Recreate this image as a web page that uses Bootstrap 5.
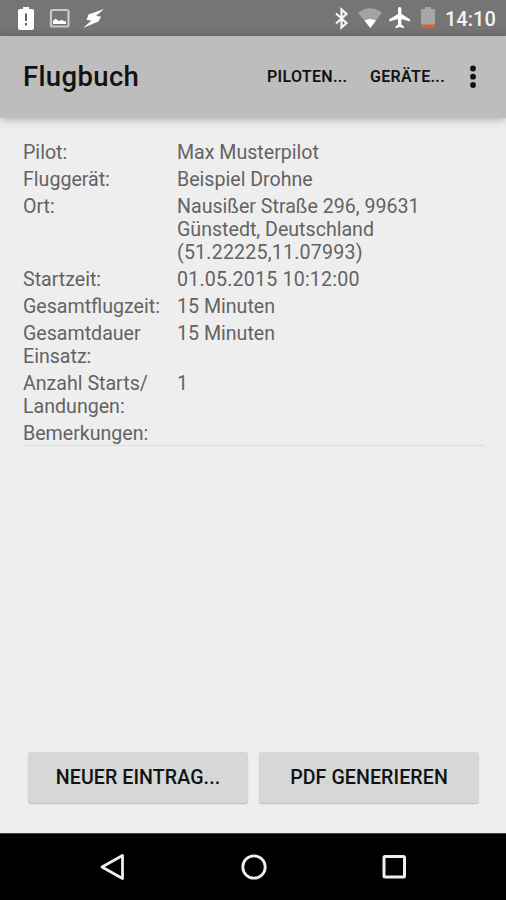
<!DOCTYPE html>
<html lang="de">
<head>
<meta charset="utf-8">
<meta name="viewport" content="width=device-width, initial-scale=1">
<title>Flugbuch</title>
<link href="https://cdn.jsdelivr.net/npm/bootstrap@5.3.0/dist/css/bootstrap.min.css" rel="stylesheet">
<style>
body{font-family:Roboto,"Noto Sans",sans-serif;background:#eee;color:#636363;height:900px;overflow:hidden}
.statusbar{height:36px;background:#757575;padding:0 11px 0 18px;color:#f4f4f4}
.statusbar svg,.sysnav svg,.overflow svg{display:block}
.clock{font-size:20px;font-weight:500;line-height:36px;width:50px;margin-left:8px;white-space:nowrap;padding-top:2px}
.appbar{height:82px;background:#bdbdbd;padding:0 28px 0 23px;color:#121212;box-shadow:0 1px 9px rgba(0,0,0,.3);z-index:1}
.title{font-size:27.5px;font-weight:500;line-height:1;letter-spacing:.35px;color:#121212}
.action{font-size:16px;font-weight:600;letter-spacing:.3px;color:#121212;line-height:24px;white-space:nowrap;text-decoration:none}
.action-first{width:81px;margin-right:22px}
.action-second{width:75px;margin-right:23px}
.log{margin:24px 21px 0 23px;font-size:19.6px;line-height:22.7px;border-bottom:1px solid #dcdcdc}
.entry{display:grid;grid-template-columns:154px 1fr;margin-bottom:4.5px}
.entry:last-child{margin-bottom:-1px}
.entry dt{font-weight:400}
.entry dt,.entry dd{margin:0;white-space:nowrap}
.digits{letter-spacing:.2px}
.actions{padding:0 27px 30px 28px;gap:11px}
.raised{height:51px;background:#d6d8d7;border:0;border-radius:3px;color:#121212;font-size:19.6px;letter-spacing:.08px;font-weight:500;line-height:52px;padding:0;box-shadow:0 1px 1px rgba(0,0,0,.22);white-space:nowrap}
.sysnav{height:67px;background:#000;border-top:1px solid #444;padding:0 98px 0 99px}
</style>
<script src="https://cdn.jsdelivr.net/npm/bootstrap@5.3.0/dist/js/bootstrap.bundle.min.js"></script>
</head>
<body class="d-flex flex-column">
<div class="statusbar d-flex align-items-center justify-content-between flex-shrink-0">
  <div class="d-flex">
    <svg width="90" height="36" viewBox="18 0 90 36" aria-hidden="true">
      <path d="M22 9h1V7h6v2h3q2 0 2 2v17q0 2-2 2H20q-2 0-2-2V11q0-2 2-2z" fill="#fff"/>
      <path d="M26 13.5v7.500M26 23v2.400" stroke="#666" stroke-width="2"/>
      <rect x="51" y="10" width="17.500" height="16.500" rx="1.500" fill="none" stroke="#c9c9c9" stroke-width="2.200"/>
      <path d="M53 24v-3l2.500-2.500 3 2.500 3-1 2.500 1 2 .5v2.500z" fill="#fff"/>
      <path d="M104 9 88.500 14.500 86.500 20 91.500 20.500 83 28 98.500 21.500 101 16.500 96 16z" fill="#fff"/>
    </svg>
  </div>
  <div class="d-flex align-items-center">
    <svg width="105" height="36" viewBox="332 0 105 36" aria-hidden="true">
      <path d="M336 13.500 346.500 23 341.500 27.500V9.500L346.500 14 336 23.500" fill="none" stroke="#f5f5f5" stroke-width="2.200"/>
      <path d="M358 12.500Q370 4 382 12.500L370.300 28z" fill="#a3a3a3"/>
      <path d="M364.500 20.500Q370.300 17.500 376 20.500L370.300 28z" fill="#fff"/>
      <path d="M410 21.500v-2.300l-8.600-5.200V8.600a1.700 1.700 0 0 0-3.400 0V14l-8.700 5.200v2.300l8.700-2.600v5.600l-2.500 1.900v1.800l4.200-1.200 4.200 1.200v-1.800l-2.500-1.900v-5.600z" fill="#fff"/>
      <path d="M425 9V7h6v2h2.500q1.500 0 1.500 1.500V25h-14V10.500q0-1.500 1.500-1.500z" fill="#a6a6a6"/>
      <path d="M421 24.500h14v2q0 1.200-1.200 1.200h-11.600q-1.200 0-1.200-1.200z" fill="#d2622f"/>
    </svg>
    <span class="clock">14:10</span>
  </div>
</div>
<header class="appbar d-flex align-items-center flex-shrink-0 position-relative">
  <h1 class="title mb-0 me-auto">Flugbuch</h1>
  <nav class="d-flex align-items-center">
    <a class="action action-first" href="#">PILOTEN...</a>
    <a class="action action-second" href="#">GERÄTE...</a>
    <a class="overflow" href="#" aria-label="Mehr"><svg width="10" height="26" viewBox="0 0 10 26"><g fill="#121212"><circle cx="5" cy="4.500" r="2.900"/><circle cx="5" cy="12.700" r="2.900"/><circle cx="5" cy="21" r="2.900"/></g></svg></a>
  </nav>
</header>
<main class="flex-grow-1 d-flex flex-column">
  <dl class="log mb-auto">
    <div class="entry"><dt>Pilot:</dt><dd>Max Musterpilot</dd></div>
    <div class="entry"><dt>Fluggerät:</dt><dd>Beispiel Drohne</dd></div>
    <div class="entry"><dt>Ort:</dt><dd>Nausißer Straße 296, 99631<br>Günstedt, Deutschland<br><span class="digits">(51.22225,11.07993)</span></dd></div>
    <div class="entry"><dt>Startzeit:</dt><dd class="digits">01.05.2015 10:12:00</dd></div>
    <div class="entry"><dt>Gesamtflugzeit:</dt><dd>15 Minuten</dd></div>
    <div class="entry"><dt>Gesamtdauer<br>Einsatz:</dt><dd>15 Minuten</dd></div>
    <div class="entry"><dt>Anzahl Starts/<br>Landungen:</dt><dd>1</dd></div>
    <div class="entry"><dt>Bemerkungen:</dt><dd></dd></div>
  </dl>
  <div class="actions d-flex">
    <button class="btn raised col" type="button">NEUER EINTRAG...</button>
    <button class="btn raised col" type="button">PDF GENERIEREN</button>
  </div>
</main>
<nav class="sysnav d-flex align-items-center justify-content-between flex-shrink-0" aria-label="System">
  <svg width="28" height="32" viewBox="0 0 28 32"><path d="M3 16 23.500 4.500v23z" fill="none" stroke="#eee" stroke-width="2.800" stroke-linejoin="round"/></svg>
  <svg width="28" height="32" viewBox="0 0 28 32"><circle cx="14" cy="16" r="11.200" fill="none" stroke="#eee" stroke-width="2.800"/></svg>
  <svg width="28" height="32" viewBox="0 0 28 32"><rect x="4" y="5.500" width="20.500" height="20.500" rx="1" fill="none" stroke="#eee" stroke-width="3"/></svg>
</nav>
</body>
</html>
